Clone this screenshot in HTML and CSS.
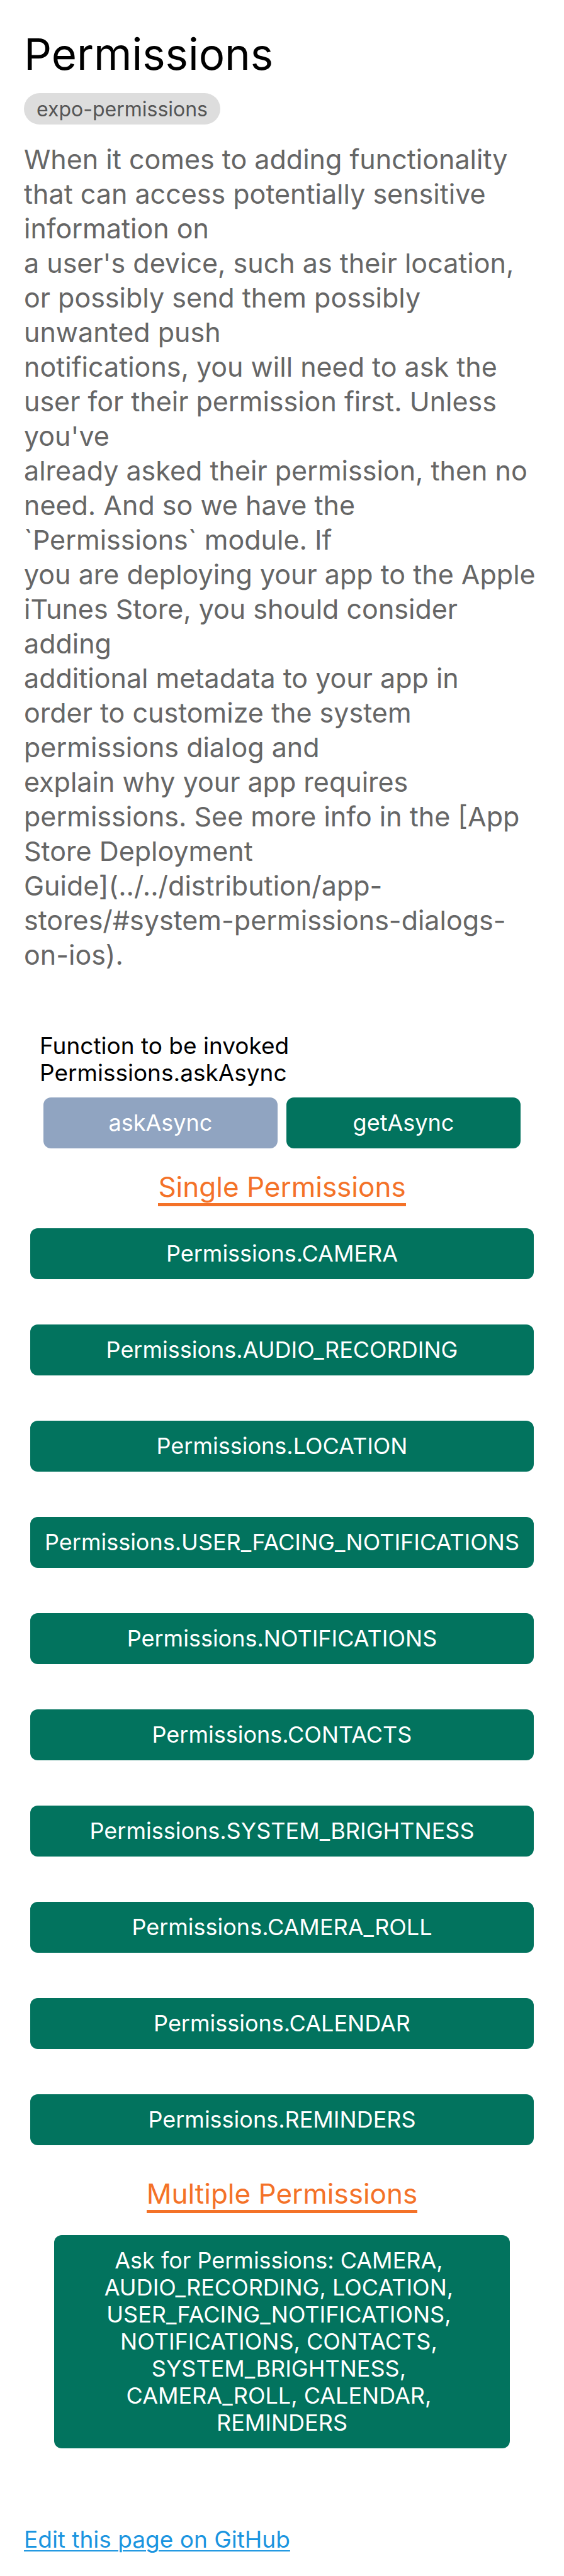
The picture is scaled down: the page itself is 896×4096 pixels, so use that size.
FILE: index.html
```html
<!DOCTYPE html>
<html lang="en">
<head>
<meta charset="utf-8">
<meta name="viewport" content="width=device-width, initial-scale=1">
<title>Permissions</title>
<link rel="stylesheet" href="styles.css">
</head>
<body>
<main class="page">
  <header class="intro">
    <h1 class="title">Permissions</h1>
    <span class="badge">expo-permissions</span>
    <p class="description">When it comes to adding functionality
that can access potentially sensitive
information on
a user's device, such as their location,
or possibly send them possibly
unwanted push
notifications, you will need to ask the
user for their permission first. Unless
you've
already asked their permission, then no
need. And so we have the
`Permissions` module. If
you are deploying your app to the Apple
iTunes Store, you should consider
adding
additional metadata to your app in
order to customize the system
permissions dialog and
explain why your app requires
permissions. See more info in the [App
Store Deployment
Guide](../../distribution/app-
stores/#system-permissions-dialogs-
on-ios).</p>
  </header>

  <section class="chooser">
    <p class="chooser-label">Function to be invoked<br>Permissions.askAsync</p>
    <div class="chooser-row">
      <button class="button button-selected" type="button">askAsync</button>
      <button class="button" type="button">getAsync</button>
    </div>
  </section>

  <section class="group">
    <h2 class="heading">Single Permissions</h2>
    <div class="stack">
      <button class="button" type="button">Permissions.CAMERA</button>
      <button class="button" type="button">Permissions.AUDIO_RECORDING</button>
      <button class="button" type="button">Permissions.LOCATION</button>
      <button class="button" type="button">Permissions.USER_FACING_NOTIFICATIONS</button>
      <button class="button" type="button">Permissions.NOTIFICATIONS</button>
      <button class="button" type="button">Permissions.CONTACTS</button>
      <button class="button" type="button">Permissions.SYSTEM_BRIGHTNESS</button>
      <button class="button" type="button">Permissions.CAMERA_ROLL</button>
      <button class="button" type="button">Permissions.CALENDAR</button>
      <button class="button" type="button">Permissions.REMINDERS</button>
    </div>
  </section>

  <section class="group">
    <h2 class="heading">Multiple Permissions</h2>
    <div class="stack stack-narrow">
      <button class="button" type="button">Ask for Permissions: CAMERA,&nbsp;<br>AUDIO_RECORDING, LOCATION,&nbsp;<br>USER_FACING_NOTIFICATIONS,&nbsp;<br>NOTIFICATIONS, CONTACTS,&nbsp;<br>SYSTEM_BRIGHTNESS,&nbsp;<br>CAMERA_ROLL, CALENDAR,&nbsp;<br>REMINDERS</button>
    </div>
  </section>

  <footer class="footer">
    <a class="edit-link" href="#edit">Edit this page on GitHub</a>
  </footer>
</main>
</body>
</html>
```
FILE: styles.css
```css
* {
  box-sizing: border-box;
}

body {
  margin: 0;
  background: #fff;
  color: #000;
  font-family: Inter, "Liberation Sans", sans-serif;
  font-size: 37px;
  line-height: 43px;
}

.page {
  display: flex;
  flex-direction: column;
  padding: 40px 0 36px;
}

.intro {
  display: flex;
  flex-direction: column;
  align-items: flex-start;
  padding: 0 20px 0 38px;
}

.title {
  margin: 0 0 16px;
  font-size: 69px;
  font-weight: 400;
  line-height: 92px;
}

.badge {
  padding: 2px 20px 0;
  border-radius: 25px;
  background: #ddd;
  color: #555;
  font-size: 32px;
  line-height: 48px;
}

.description {
  margin: 28px 0 0;
  color: #666;
  font-size: 43px;
  line-height: 55px;
  white-space: pre-line;
}

.chooser {
  padding: 95px 63px 0;
}

.chooser-label {
  margin: 0;
}

.chooser-row {
  display: flex;
  gap: 14px;
  padding: 18px 6px 0;
}

.chooser-row .button {
  flex: 1;
}

.button {
  padding: 19px 20px;
  border: 0;
  border-radius: 12px;
  background: #02735e;
  color: #fff;
  font: inherit;
  font-size: 36px;
  text-align: center;
  cursor: pointer;
}

.button-selected {
  background: #90a4c1;
}

.group {
  display: flex;
  flex-direction: column;
  align-items: center;
  padding: 35px 0 16px;
}

.heading {
  margin: 0 0 35px;
  border-bottom: 5px solid #f47228;
  color: #f47228;
  font-size: 44px;
  font-weight: 400;
  line-height: 52px;
}

.stack {
  display: flex;
  flex-direction: column;
  align-self: stretch;
  gap: 72px;
  padding: 0 48px;
}

.stack-narrow {
  padding: 0 86px;
}

.footer {
  padding: 107px 38px 0;
}

.edit-link {
  color: #1b95e0;
  text-decoration-thickness: 2px;
  text-underline-offset: 4px;
}
```
